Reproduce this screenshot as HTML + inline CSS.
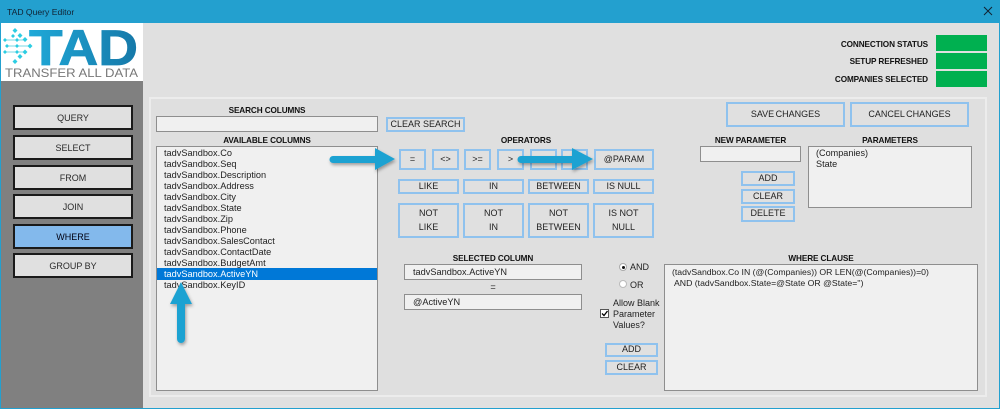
<!DOCTYPE html>
<html><head><meta charset="utf-8"><style>
html,body{margin:0;padding:0;width:1000px;height:409px;overflow:hidden;background:#e0e0e0}
#r{position:relative;width:1000px;height:409px;overflow:hidden;font-family:"Liberation Sans",sans-serif;font-size:9.2px;color:#222;background:#e0e0e0}
#r div{position:absolute;box-sizing:border-box;white-space:nowrap}
.nav{left:13px;width:120px;height:25px;background:#e0e0e0;border:2px solid #1a1a1a;text-align:center;line-height:23px;color:#2a2a2a;font-size:9px}
.b{background:#e0e0e0;border:2px solid #8fc2ee;text-align:center;color:#222;display:flex;align-items:center;justify-content:center;line-height:13.5px;font-size:9px}
.l{font-weight:bold;color:#111;text-align:center;line-height:12px;font-size:8.2px;letter-spacing:-.1px;margin-top:1px}
.f{background:#f0f0f0;border:1px solid #8e8e8e}
.i{left:164px;line-height:11px;color:#222}
</style></head><body><div id="r">
<div style="left:0;top:0;width:1000px;height:23px;background:#23a0cf"></div>
<div style="left:7px;top:6px;line-height:12px;color:#123;font-size:8.6px">TAD Query Editor</div>
<svg style="position:absolute;left:982px;top:5px" width="12" height="12"><path d="M2 2L10 10M10 2L2 10" stroke="#123" stroke-width="1" fill="none"/></svg>
<div style="left:0;top:23px;width:1px;height:386px;background:#23a0cf"></div>
<div style="left:999px;top:23px;width:1px;height:386px;background:#23a0cf"></div>
<div style="left:0;top:408px;width:1000px;height:1px;background:#23a0cf"></div>
<div style="left:1px;top:23px;width:142px;height:385px;background:#808080"></div>
<div style="left:1px;top:23px;width:142px;height:58px;background:#fff"></div>
<svg style="position:absolute;left:1px;top:23px" width="142" height="58" viewBox="0 0 142 58">
<defs><linearGradient id="g" x1="0" y1="0" x2="1" y2="0"><stop offset="0" stop-color="#1fa9d8"/><stop offset="1" stop-color="#1678a8"/></linearGradient></defs>
<g stroke="#7ad8e6" stroke-width="1" fill="none"><path d="M4 17H24M6 23H29M4 29H24"/></g>
<g fill="#2ccde2"><path d="M14 5l2.500 2.500-2.500 2.500-2.500-2.500zM19 10l2.500 2.500-2.500 2.500-2.500-2.500zM12 11l2 2-2 2-2-2zM24 14l2.500 2.500-2.500 2.500-2.500-2.500zM29 20.500l2.500 2.500-2.500 2.500-2.500-2.500zM24 26.500l2.500 2.500-2.500 2.500-2.500-2.500zM19 31l2.500 2.500-2.500 2.500-2.500-2.500zM14 36l2.500 2.500-2.500 2.500-2.500-2.500zM6 21l2 2-2 2-2-2zM4 15l2 2-2 2-2-2zM4 27l2 2-2 2-2-2zM16 15l2 2-2 2-2-2zM16 21l2 2-2 2-2-2zM16 27l2 2-2 2-2-2z"/></g>
<text x="28" y="42" font-family="Liberation Sans" font-weight="bold" font-size="50" fill="url(#g)" stroke="url(#g)" stroke-width=".8" textLength="109" lengthAdjust="spacingAndGlyphs">TAD</text>
<text x="4" y="54" font-family="Liberation Sans" font-size="12" fill="#777" textLength="133" lengthAdjust="spacingAndGlyphs">TRANSFER ALL DATA</text>
</svg>
<div class="nav" style="top:105px">QUERY</div>
<div class="nav" style="top:135px">SELECT</div>
<div class="nav" style="top:165px">FROM</div>
<div class="nav" style="top:194px">JOIN</div>
<div class="nav" style="top:224px;background:#83b9ec;color:#001;">WHERE</div>
<div class="nav" style="top:253px">GROUP BY</div>

<div style="left:149px;top:97px;width:838px;height:300px;background:#dfdfdf;border:2px solid #ececec"></div>

<div class="l" style="left:816px;width:112px;top:38px;text-align:right">CONNECTION STATUS</div>
<div class="l" style="left:816px;width:112px;top:55px;text-align:right">SETUP REFRESHED</div>
<div class="l" style="left:816px;width:112px;top:73px;text-align:right">COMPANIES SELECTED</div>
<div style="left:936px;top:35px;width:51px;height:16px;background:#00b050"></div>
<div style="left:936px;top:53px;width:51px;height:16px;background:#00b050"></div>
<div style="left:936px;top:71px;width:51px;height:16px;background:#00b050"></div>

<div class="l" style="left:156px;width:222px;top:104px">SEARCH COLUMNS</div>
<div class="f" style="left:156px;top:116px;width:222px;height:16px"></div>
<div class="b" style="left:386px;top:117px;width:79px;height:15px">CLEAR SEARCH</div>
<div class="l" style="left:156px;width:222px;top:134px">AVAILABLE COLUMNS</div>
<div class="f" style="left:156px;top:146px;width:222px;height:245px"></div>
<div class="i" style="top:148px">tadvSandbox.Co</div>
<div class="i" style="top:159px">tadvSandbox.Seq</div>
<div class="i" style="top:170px">tadvSandbox.Description</div>
<div class="i" style="top:181px">tadvSandbox.Address</div>
<div class="i" style="top:192px">tadvSandbox.City</div>
<div class="i" style="top:203px">tadvSandbox.State</div>
<div class="i" style="top:214px">tadvSandbox.Zip</div>
<div class="i" style="top:225px">tadvSandbox.Phone</div>
<div class="i" style="top:236px">tadvSandbox.SalesContact</div>
<div class="i" style="top:247px">tadvSandbox.ContactDate</div>
<div class="i" style="top:258px">tadvSandbox.BudgetAmt</div>
<div style="left:157px;top:268px;width:220px;height:12px;background:#0078d7"></div>
<div class="i" style="top:269px;color:#fff">tadvSandbox.ActiveYN</div>
<div class="i" style="top:280px">tadvSandbox.KeyID</div>

<div class="l" style="left:398px;width:256px;top:134px">OPERATORS</div>
<div class="b" style="left:399px;top:149px;width:27px;height:21px">=</div>
<div class="b" style="left:432px;top:149px;width:27px;height:21px">&lt;&gt;</div>
<div class="b" style="left:464px;top:149px;width:27px;height:21px">&gt;=</div>
<div class="b" style="left:497px;top:149px;width:27px;height:21px">&gt;</div>
<div class="b" style="left:530px;top:149px;width:27px;height:21px">&lt;</div>
<div class="b" style="left:561px;top:149px;width:27px;height:21px">&lt;=</div>
<div class="b" style="left:594px;top:149px;width:60px;height:21px">@PARAM</div>
<div class="b" style="left:398px;top:179px;width:61px;height:15px">LIKE</div>
<div class="b" style="left:463px;top:179px;width:61px;height:15px">IN</div>
<div class="b" style="left:528px;top:179px;width:61px;height:15px">BETWEEN</div>
<div class="b" style="left:593px;top:179px;width:61px;height:15px">IS NULL</div>
<div class="b" style="left:398px;top:203px;width:61px;height:35px">NOT<br>LIKE</div>
<div class="b" style="left:463px;top:203px;width:61px;height:35px">NOT<br>IN</div>
<div class="b" style="left:528px;top:203px;width:61px;height:35px">NOT<br>BETWEEN</div>
<div class="b" style="left:593px;top:203px;width:61px;height:35px">IS NOT<br>NULL</div>

<div class="l" style="left:404px;width:178px;top:252px">SELECTED COLUMN</div>
<div class="f" style="left:404px;top:264px;width:178px;height:16px;padding-left:8px;line-height:14px">tadvSandbox.ActiveYN</div>
<div style="left:404px;width:178px;top:281px;text-align:center;line-height:12px">=</div>
<div class="f" style="left:404px;top:294px;width:178px;height:16px;padding-left:8px;line-height:14px">@ActiveYN</div>

<div style="left:619px;top:263px;width:8px;height:8px;border-radius:50%;background:#fff;border:1px solid #aaa"></div>
<div style="left:621.5px;top:265.5px;width:3px;height:3px;border-radius:50%;background:#111"></div>
<div style="left:630px;top:261px;line-height:12px;font-size:9px">AND</div>
<div style="left:619px;top:280px;width:8px;height:8px;border-radius:50%;background:#fff;border:1px solid #bbb"></div>
<div style="left:630px;top:279px;line-height:12px;font-size:9px">OR</div>
<div style="left:600px;top:309px;width:9px;height:9px;background:#fff;border:1px solid #555"></div>
<svg style="position:absolute;left:600px;top:309px" width="9" height="9"><path d="M2 4.500L4 6.500L7.500 2" stroke="#000" stroke-width="1.3" fill="none"/></svg>
<div style="left:613px;top:298px;line-height:11px;font-size:9px">Allow Blank<br>Parameter<br>Values?</div>
<div class="b" style="left:605px;top:343px;width:53px;height:14px">ADD</div>
<div class="b" style="left:605px;top:360px;width:53px;height:15px">CLEAR</div>

<div class="l" style="left:664px;width:314px;top:252px">WHERE CLAUSE</div>
<div class="f" style="left:664px;top:264px;width:314px;height:127px"></div>
<div style="left:672px;top:267px;line-height:11px;font-size:8.7px">(tadvSandbox.Co IN (@(Companies)) OR LEN(@(Companies))=0)</div>
<div style="left:674px;top:278px;line-height:11px;font-size:8.7px">AND (tadvSandbox.State=@State OR @State='')</div>

<div class="b" style="left:726px;top:102px;width:119px;height:25px;word-spacing:-1px">SAVE CHANGES</div>
<div class="b" style="left:850px;top:102px;width:119px;height:25px;word-spacing:-1px">CANCEL CHANGES</div>
<div class="l" style="left:700px;width:101px;top:134px">NEW PARAMETER</div>
<div class="f" style="left:700px;top:146px;width:101px;height:16px"></div>
<div class="b" style="left:741px;top:171px;width:54px;height:15px">ADD</div>
<div class="b" style="left:741px;top:189px;width:54px;height:15px">CLEAR</div>
<div class="b" style="left:741px;top:206px;width:54px;height:16px">DELETE</div>
<div class="l" style="left:808px;width:164px;top:134px">PARAMETERS</div>
<div class="f" style="left:808px;top:146px;width:164px;height:62px"></div>
<div style="left:816px;top:148px;line-height:11px;font-size:9.1px">(Companies)<br>State</div>

<svg style="position:absolute;left:0;top:0;pointer-events:none" width="1000" height="409">
<defs><filter id="s" x="-30%" y="-30%" width="160%" height="160%"><feDropShadow dx="1" dy="2" stdDeviation="1.500" flood-color="#000" flood-opacity=".35"/></filter></defs>
<g fill="#1fa2d2" filter="url(#s)">
<path d="M333 156H375V148L395 159L375 170V163H333A3.500 3.500 0 0 1 333 156Z"/>
<path d="M521 156H572V148L593 159L572 170V163H521A3.500 3.500 0 0 1 521 156Z"/>
<path d="M181 282L192 304H185V339A4 4 0 0 1 177 339V304H170Z"/>
</g></svg>
</div></body></html>
